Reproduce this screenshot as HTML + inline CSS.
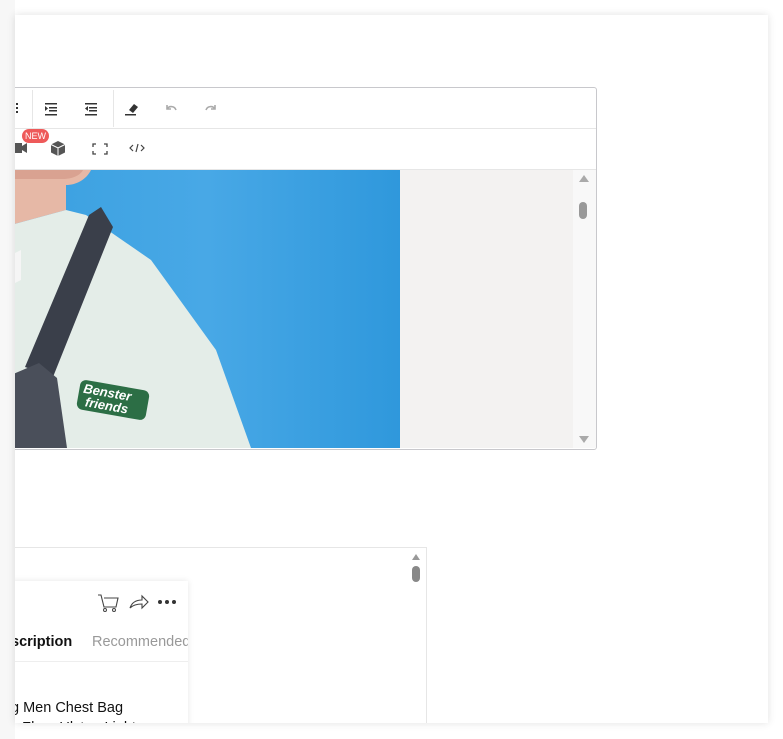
<!DOCTYPE html>
<html><head><style>
body{margin:0;width:783px;height:739px;background:#fff;position:relative;overflow:hidden;font-family:"Liberation Sans",sans-serif}
.abs{position:absolute}
#card{left:15px;top:15px;width:753px;height:708px;background:#fff;box-shadow:0 0 8px rgba(0,0,0,.12);overflow:hidden}
</style></head><body>
<div class="abs" style="left:0;top:0;width:15px;height:739px;background:#f7f7f7"></div>
<div id="card" class="abs">
 <div class="abs" style="left:-5px;top:72px;width:585px;height:361px;border:1px solid #c8c8cc;border-radius:3px;background:#fff">
  <div class="abs" style="left:0;top:40px;width:585px;height:1px;background:#e6e6e6"></div>
  <div class="abs" style="left:0;top:81px;width:585px;height:1px;background:#e6e6e6"></div>
  <div class="abs" style="left:21px;top:2px;width:1px;height:37px;background:#e6e6e6"></div>
  <div class="abs" style="left:102px;top:2px;width:1px;height:37px;background:#e6e6e6"></div>
  <svg class="abs" style="left:0;top:0" width="585" height="82">
   <g fill="#333">
    <rect x="5" y="15" width="2" height="2"/><rect x="5" y="19" width="2" height="2"/><rect x="5" y="23" width="2" height="2"/>
    <rect x="34" y="15" width="12" height="1.5"/><rect x="38" y="19" width="8" height="1.5"/><rect x="38" y="22" width="8" height="1.5"/><rect x="34" y="26" width="12" height="1.5"/><path d="M34 18l3 2.5-3 2.5z"/>
    <rect x="74" y="15" width="12" height="1.5"/><rect x="78" y="19" width="8" height="1.5"/><rect x="78" y="22" width="8" height="1.5"/><rect x="74" y="26" width="12" height="1.5"/><path d="M77 18l-3 2.5 3 2.5z"/>
    <path d="M118 22l5-6 4 3-5 6z"/><rect x="114" y="26" width="11" height="1.5"/>
   </g>
   <path d="M156 21a5 5 0 0 1 9 1M156 17v4h4" stroke="#aaa" stroke-width="1.6" fill="none"/>
   <path d="M204 21a5 5 0 0 0-9 1M204 17v4h-4" stroke="#aaa" stroke-width="1.6" fill="none"/>
   <path d="M3 55h8v10h-8z M11 58l5-3v10l-5-3z" fill="#555"/>
   <path d="M47 53l7 3.5v8l-7 3.5-7-3.5v-8z" fill="#555"/><path d="M40 56.5l7 3.5 7-3.5M47 60v8" stroke="#fff" stroke-width="1" fill="none"/>
   <path d="M82 59v-3h3M93 56h3v3M82 63v3h3M96 63v3h-3" stroke="#444" stroke-width="1.3" fill="none"/>
   <path d="M122 57l-3 3 3 3M130 57l3 3-3 3M127 56l-2 8" stroke="#444" stroke-width="1.2" fill="none"/>
  </svg>
  <div class="abs" style="left:11px;top:41px;width:27px;height:14px;border-radius:7px;background:#ee5a5a;color:#fff;font-size:9px;line-height:14px;text-align:center">NEW</div>
  <div class="abs" style="left:0;top:82px;width:389px;height:278px;background:#3aa3e3;overflow:hidden">
   <svg width="389" height="278">
    <defs><linearGradient id="g" x1="0" x2="1"><stop offset="0" stop-color="#3aa0e0"/><stop offset=".5" stop-color="#48a8e6"/><stop offset="1" stop-color="#2f98dc"/></linearGradient></defs>
    <rect width="389" height="278" fill="url(#g)"/>
    <path d="M0 0h80c-5 10-15 15-25 15v25l-55 15z" fill="#e6b8a6"/>
    <path d="M0 0h72c-3 6-12 9-20 9h-52z" fill="#d9a291"/>
    <path d="M0 55l55-15 20 5 L140 90 L205 180 L240 278 H0z" fill="#e4ede8"/>
    <path d="M0 85l10-5v30l-10 5z" fill="#f5f5f5"/>
    <path d="M78 45l12-8 12 20-60 150-28-10z" fill="#3a3f4a"/>
    <path d="M0 205l28-12 18 15 10 70h-56z" fill="#4a4f5a"/>
    <rect x="67" y="215" width="70" height="30" rx="6" fill="#2c6e45" transform="rotate(10 102 230)"/>
    <text x="71" y="228" font-size="13" font-weight="bold" fill="#fff" font-style="italic" transform="rotate(10 102 230)">Benster</text>
    <text x="75" y="241" font-size="13" font-weight="bold" fill="#fff" font-style="italic" transform="rotate(10 102 230)">friends</text>
   </svg>
  </div>
  <div class="abs" style="left:389px;top:82px;width:173px;height:278px;background:#f3f2f1"></div>
  <div class="abs" style="left:562px;top:82px;width:23px;height:278px;background:#f8f8f8"></div>
  <div class="abs" style="left:568px;top:87px;width:0;height:0;border-left:5px solid transparent;border-right:5px solid transparent;border-bottom:7px solid #aaa"></div>
  <div class="abs" style="left:568px;top:114px;width:8px;height:17px;border-radius:4px;background:#999"></div>
  <div class="abs" style="left:568px;top:348px;width:0;height:0;border-left:5px solid transparent;border-right:5px solid transparent;border-top:7px solid #aaa"></div>
 </div>
 <div class="abs" style="left:-5px;top:532px;width:415px;height:200px;border:1px solid #e6e6e6;background:#fff">
  <div class="abs" style="left:0;top:33px;width:177px;height:170px;background:#fff;box-shadow:0 0 6px rgba(0,0,0,.1);overflow:hidden">
   <svg class="abs" style="left:86px;top:10px" width="90" height="24">
    <path d="M1 4h3l3 12h12l2-9h-14" stroke="#444" stroke-width="1.1" fill="none"/><circle cx="8" cy="19" r="1.5" fill="none" stroke="#444"/><circle cx="17" cy="19" r="1.5" fill="none" stroke="#444"/>
    <path d="M33 17c2-6 7-8 12-8v-4l6 6-6 6v-4c-5 0-9 1-12 4z" stroke="#444" stroke-width="1.1" fill="none"/>
    <circle cx="63" cy="11" r="2" fill="#333"/><circle cx="70" cy="11" r="2" fill="#333"/><circle cx="77" cy="11" r="2" fill="#333"/>
   </svg>
   <div class="abs" style="left:0;top:53px;font-size:14.5px;font-weight:bold;color:#111">scription</div>
   <div class="abs" style="left:81px;top:53px;font-size:14.5px;color:#999;white-space:nowrap">Recommended</div>
   <div class="abs" style="left:0;top:80px;width:177px;height:1px;background:#eee"></div>
   <div class="abs" style="left:0;top:119px;font-size:14.5px;color:#111;white-space:nowrap">g Men Chest Bag</div>
   <div class="abs" style="left:0;top:139px;font-size:14.5px;color:#111;white-space:nowrap">s Zhou Ulsten Light</div>
  </div>
  <div class="abs" style="left:401px;top:6px;width:0;height:0;border-left:4px solid transparent;border-right:4px solid transparent;border-bottom:6px solid #999"></div>
  <div class="abs" style="left:401px;top:18px;width:8px;height:16px;border-radius:4px;background:#888"></div>
 </div>
</div>
</body></html>
